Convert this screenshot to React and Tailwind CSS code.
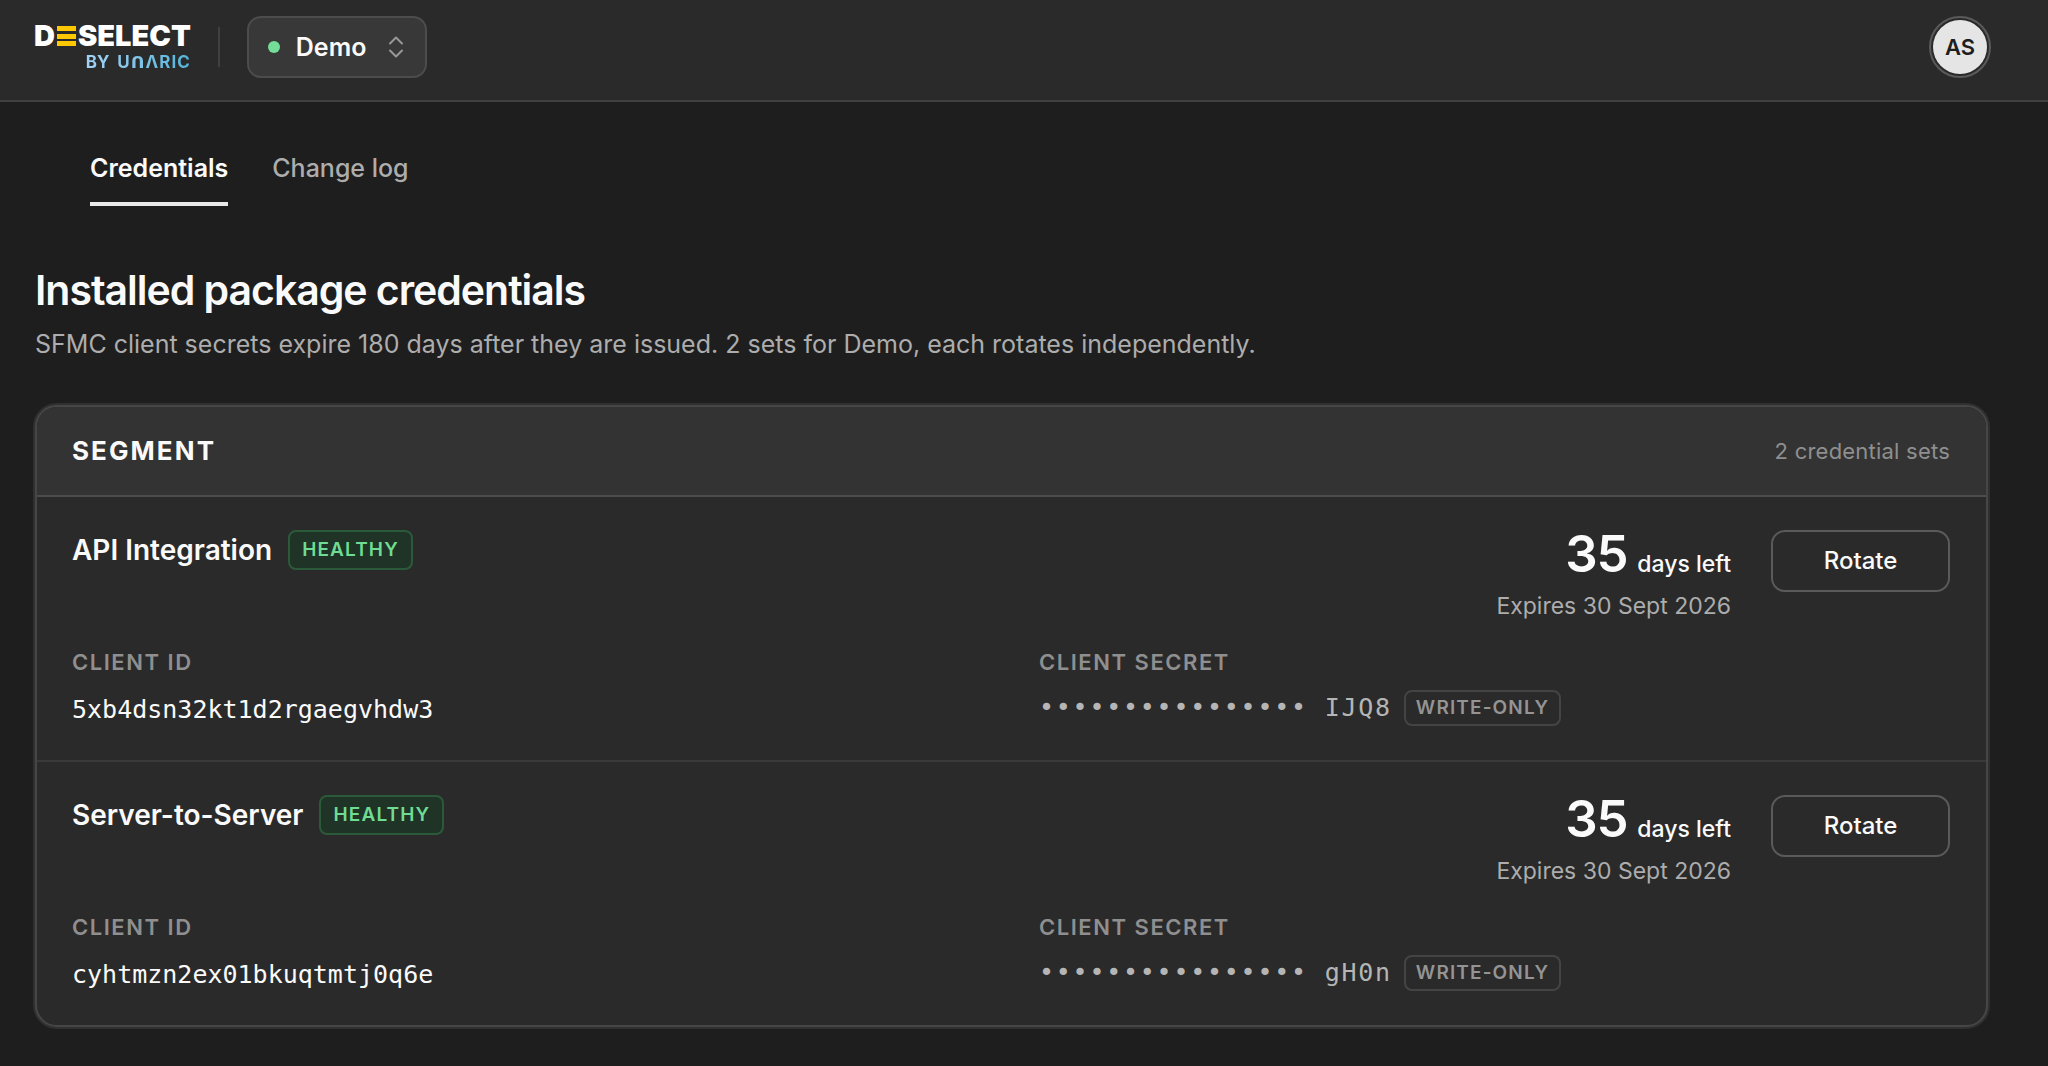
import { useState } from 'react'

const workspaces = ['Demo']

const tabs = ['Credentials', 'Change log']

const credentialSets = [
  {
    name: 'API Integration',
    status: 'HEALTHY',
    daysLeft: 35,
    expires: '30 Sept 2026',
    clientId: '5xb4dsn32kt1d2rgaegvhdw3',
    secretTail: 'IJQ8',
  },
  {
    name: 'Server-to-Server',
    status: 'HEALTHY',
    daysLeft: 35,
    expires: '30 Sept 2026',
    clientId: 'cyhtmzn2ex01bkuqtmtj0q6e',
    secretTail: 'gH0n',
  },
]

function Logo() {
  return (
    <a href="#" aria-label="DESELECT by Unaric" className="flex flex-col items-end gap-2 pt-[2px]">
      <span className="flex items-center gap-[2px] text-[29px] leading-5 font-black text-white">
        <span>D</span>
        <svg width="19" height="20" viewBox="0 0 19 20" fill="#ffc800" aria-hidden="true">
          <rect width="19" height="5" />
          <rect y="8" width="19" height="5" />
          <rect y="15" width="19" height="5" />
        </svg>
        <span>SELECT</span>
      </span>
      <span className="flex gap-2 bg-gradient-to-r from-[#a3d2f7] to-[#52b5d9] bg-clip-text font-['Inter','DejaVu_Sans',sans-serif] text-[17px] leading-4 font-bold text-transparent">
        <span>BY</span>
        <span className="tracking-[1px]">UᑎΛRIC</span>
      </span>
    </a>
  )
}

function CredentialRow({ item }) {
  return (
    <li className="pt-[33px] pr-9 pb-[30px] pl-[35px]">
      <div className="flex items-start justify-between">
        <div className="flex items-center gap-4">
          <h3 className="text-[28px] leading-10 font-semibold">{item.name}</h3>
          <span className="flex h-10 items-center rounded-lg border-2 border-[#2b5a3a] bg-[#1f3326] px-3 text-[19px] font-semibold tracking-[0.06em] text-[#6fdb93]">
            {item.status}
          </span>
        </div>

        <div className="flex items-start gap-10">
          <div className="text-right">
            <p className="flex items-baseline justify-end gap-[10px] font-medium">
              <span className="text-[51px] leading-[48px] font-semibold tracking-tight">{item.daysLeft}</span>
              <span className="text-[23px] leading-6">days left</span>
            </p>
            <p className="mt-3 text-[23px] leading-8 text-[#adadad]">Expires {item.expires}</p>
          </div>
          <button className="h-[62px] w-[179px] rounded-[14px] border-2 border-[#5a5a5a] text-[24px] font-medium hover:bg-[#333333]">
            Rotate
          </button>
        </div>
      </div>

      <dl className="mt-[26px] grid grid-cols-2 gap-14">
        <div>
          <dt className="text-[22px] leading-7 font-semibold tracking-[0.07em] text-[#8f8f8f]">CLIENT ID</dt>
          <dd className="mt-[14px] font-['DejaVu_Sans_Mono',monospace] text-[25px] leading-10">{item.clientId}</dd>
        </div>
        <div>
          <dt className="text-[22px] leading-7 font-semibold tracking-[0.07em] text-[#8f8f8f]">CLIENT SECRET</dt>
          <dd className="mt-[14px] flex items-center gap-3">
            <span className="font-['DejaVu_Sans_Mono',monospace] text-[25px] leading-9 tracking-[0.07em] text-[#b5b5b5]">
              {'•'.repeat(16)} {item.secretTail}
            </span>
            <span className="flex h-9 items-center rounded-lg border-2 border-[#444444] px-[10px] text-[19px] font-semibold tracking-[0.06em] text-[#949494]">
              WRITE-ONLY
            </span>
          </dd>
        </div>
      </dl>
    </li>
  )
}

export default function App() {
  const [workspace, setWorkspace] = useState('Demo')
  const [activeTab, setActiveTab] = useState('Credentials')

  return (
    <div className="min-h-screen bg-[#1e1e1e] font-['Inter',sans-serif] text-[#fafafa]">
      {/* Header */}
      <header className="flex items-center justify-between border-b-2 border-[#404040] bg-[#2a2a2a] pt-4 pr-[57px] pb-[22px] pl-[34px]">
        <div className="flex items-center">
          <Logo />
          <div className="ml-[27px] h-10 w-[2px] bg-[#404040]"></div>
          <div className="relative ml-[27px] flex items-center">
            <span className="pointer-events-none absolute left-[21px] size-3 rounded-full bg-[#74dd98]"></span>
            <select
              aria-label="Workspace"
              value={workspace}
              onChange={(e) => setWorkspace(e.target.value)}
              className="h-[62px] w-[180px] appearance-none rounded-[14px] border-2 border-[#4c4c4c] bg-[#383838] pt-[2px] pl-[47px] text-[25px] font-semibold"
            >
              {workspaces.map((w) => (
                <option key={w}>{w}</option>
              ))}
            </select>
            <svg
              className="pointer-events-none absolute right-[23px]"
              width="16"
              height="22"
              viewBox="0 0 16 22"
              fill="none"
              stroke="#989898"
              strokeWidth="2"
              strokeLinecap="round"
              strokeLinejoin="round"
              aria-hidden="true"
            >
              <path d="M2 7.500 8 1.500l6 6" />
              <path d="m2 14.500 6 6 6-6" />
            </svg>
          </div>
        </div>
        <button
          aria-label="Account"
          className="flex size-[62px] items-center justify-center rounded-full border-2 border-[#5a5a5a] p-[2px]"
        >
          <span className="flex size-full items-center justify-center rounded-full bg-[#e5e5e5] text-[22px] font-semibold text-[#1e1e1e]">
            AS
          </span>
        </button>
      </header>

      <main className="pr-[60px] pl-[35px]">
        {/* Tabs */}
        <nav className="mt-[50px] flex gap-11 pl-[55px]">
          {tabs.map((tab) => (
            <button
              key={tab}
              onClick={() => setActiveTab(tab)}
              className={
                activeTab === tab
                  ? 'border-b-4 border-[#e9e9e9] pb-[18px] text-[25px] leading-8 font-semibold'
                  : 'border-b-4 border-transparent pb-[18px] text-[25px] leading-8 font-medium text-[#adadad]'
              }
            >
              {tab}
            </button>
          ))}
        </nav>

        <h1 className="mt-[60px] text-[41px] leading-[48px] font-semibold tracking-tight">Installed package credentials</h1>
        <p className="mt-3 text-[25px] leading-9 text-[#adadad]">
          SFMC client secrets expire 180 days after they are issued. {credentialSets.length} sets for {workspace}, each rotates
          independently.
        </p>

        {/* Credentials card */}
        <section className="mt-[43px] overflow-hidden rounded-[22px] border-2 border-[#464646] bg-[#2a2a2a] ring-2 ring-[#303030]">
          <div className="flex items-center justify-between border-b-2 border-[#4c4c4c] bg-[#333333] py-7 pr-9 pl-[35px]">
            <h2 className="text-[26px] leading-8 font-bold tracking-[0.08em]">SEGMENT</h2>
            <span className="text-[22px] leading-8 tracking-[0.01em] text-[#8f8f8f]">
              {credentialSets.length} credential sets
            </span>
          </div>
          <ul className="divide-y-2 divide-[#3a3a3a]">
            {credentialSets.map((item) => (
              <CredentialRow key={item.name} item={item} />
            ))}
          </ul>
        </section>
      </main>
    </div>
  )
}
